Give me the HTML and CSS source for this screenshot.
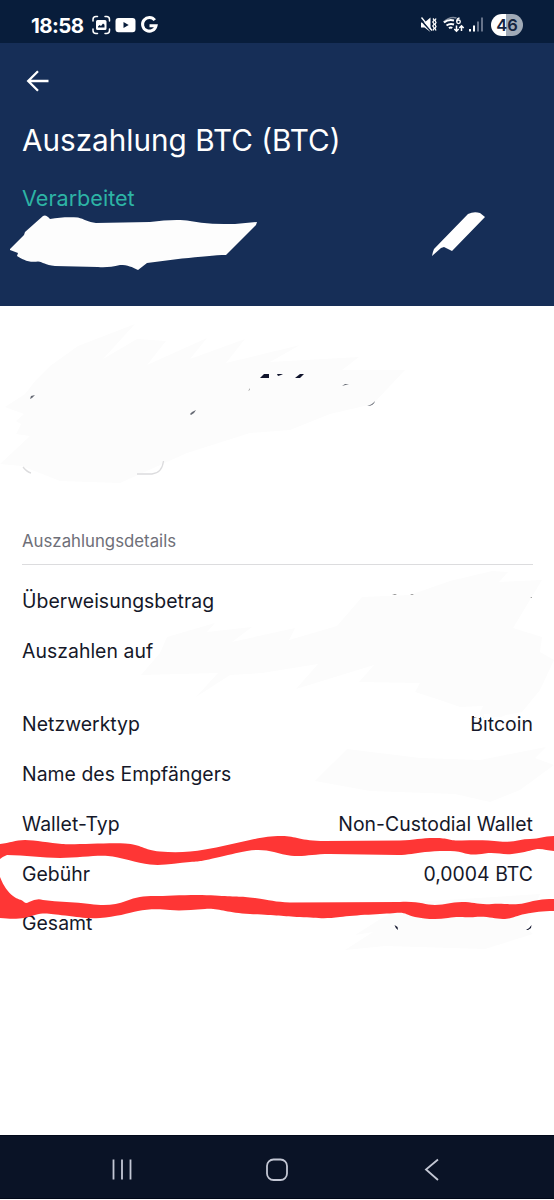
FILE: index.html
```html
<!DOCTYPE html>
<html lang="de">
<head>
<meta charset="utf-8">
<title>Auszahlung BTC</title>
<link rel="stylesheet" href="styles.css">
</head>
<body>
<div class="screen">
  <div class="statusbar">
    <span class="clock">18:58</span>
    <svg class="st-left" width="68" height="20" viewBox="0 0 68 20">
      <g fill="none" stroke="#fff" stroke-width="1.5" stroke-linecap="round">
        <path d="M1 6V4.500Q1 1.500 4 1.500H5.500M13 1.500H14.500Q17.500 1.500 17.500 4.500V6M17.500 14V15.500Q17.500 18.500 14.500 18.500H13M5.500 18.500H4Q1 18.500 1 15.500V14"/>
      </g>
      <path fill="#fff" fill-rule="evenodd" d="M5.500 5H13Q14.500 5 14.500 6.500V13.500Q14.500 15 13 15H5.500Q4 15 4 13.500V6.500Q4 5 5.500 5ZM6 12.500H12.500V9.800L11 8.500L9 11L7.500 10L6 11.500Z"/>
      <path fill="#fff" fill-rule="evenodd" d="M26.500 3H40.500Q43.500 3 43.500 6V14.200Q43.500 17.200 40.500 17.200H26.500Q23.500 17.200 23.500 14.200V6Q23.500 3 26.500 3ZM31.500 7V13L36.700 10Z"/>
      <path fill="none" stroke="#fff" stroke-width="3" d="M62.800 5.200A6.800 6.800 0 1 0 64 10.800H57.500"/>
    </svg>
    <svg class="st-right" width="64" height="18" viewBox="0 0 64 18">
      <path fill="#fff" d="M1 6.500H4.500L10.500 1.500V16L4.500 11.500H1Z"/>
      <path d="M0 3L12.500 17" stroke="#081d3b" stroke-width="1.500"/>
      <path d="M1.500 1.500L12 14.500M13 2.500l1.200 1.500-1.400 2 1.400 2-1.400 2 1.400 2-1.200 2.500M16 2.500l-1 2 1 2-1 2 1 2-1 2 1 2" stroke="#fff" stroke-width="1.300" fill="none"/>
      <path d="M23.500 6Q30 0 36.500 2" stroke="#7c8798" stroke-width="1.600" fill="none"/>
      <path d="M24 6.500Q28.500 3 34 4.500M26.500 9.500Q30 7 34 8.500M29 12.200Q30.500 11 32.300 12" stroke="#fff" stroke-width="2" fill="none"/>
      <path d="M39.500 2Q36.800 2.500 36.800 5.500" stroke="#fff" stroke-width="1.300" fill="none"/>
      <circle cx="38.500" cy="5.800" r="1.800" stroke="#fff" stroke-width="1.300" fill="none"/>
      <path d="M36.500 9.500V15M34.300 13l2.200 2.200 2.200-2.200M41.500 15V10M39.300 12l2.200-2.200 2.200 2.200" stroke="#fff" stroke-width="1.500" fill="none"/>
      <path d="M50 13v2.500M54 9.500v6" stroke="#fff" stroke-width="2"/>
      <path d="M58 5.500v10M62 1.500v14" stroke="#66738a" stroke-width="2"/>
    </svg>
    <span class="battery">46</span>
  </div>
  <header class="header">
    <svg class="back" width="24" height="24" viewBox="0 0 24 24"><path d="M22.500 12H2M12 2.300L2.200 12l9.800 9.700" fill="none" stroke="#fff" stroke-width="2.300"/></svg>
    <h1 class="title">Auszahlung BTC (BTC)</h1>
    <div class="status">Verarbeitet</div>
  </header>
  <main class="content">
    <h2 class="section">Auszahlungsdetails</h2>
    <div class="rows">
      <div class="row"><span>Überweisungsbetrag</span></div>
      <div class="row tall"><span>Auszahlen auf</span></div>
      <div class="row"><span>Netzwerktyp</span><span>Bitcoin</span></div>
      <div class="row"><span>Name des Empfängers</span></div>
      <div class="row"><span>Wallet-Typ</span><span>Non-Custodial Wallet</span></div>
      <div class="row"><span>Gebühr</span><span>0,0004 BTC</span></div>
      <div class="row"><span>Gesamt</span></div>
    </div>
  </main>
  <nav class="navbar">
    <svg width="22" height="24" viewBox="0 0 22 24"><path d="M2.500 1.500v20M11 1.500v20M19.500 1.500v20" stroke="#c3c7d4" stroke-width="1.800"/></svg>
    <svg width="24" height="24" viewBox="0 0 24 24"><rect x="2" y="1.500" width="20" height="20.500" rx="6.500" fill="none" stroke="#c3c7d4" stroke-width="1.800"/></svg>
    <svg width="22" height="24" viewBox="0 0 22 24"><path d="M17 1.500L5 11.500l12 10.500" fill="none" stroke="#c3c7d4" stroke-width="1.800"/></svg>
  </nav>
  <svg class="ink" width="554" height="1200" viewBox="0 0 554 1200">
    <g fill="#fcfcfc">
      <path d="M0 464L30 436 16 434 21 424 16 421 24 414 5 407 25 394 36 380 50 366 78 346 135 324 103 359 137 339 166 341 147 365 207 338 190 359 245 339 226 363 300 345 270 362 359 357 342 370 405 370 373 404 330 414 290 430 250 433 187 453 120 483 60 481 22 466Z"/>
      <path d="M141 675L160 653 167 637 215 623 207 632 252 627 232 642 295 628 289 640 337 626 362 597 410 595 450 581 492 571 508 572 499 582 542 580 513 628 542 637 540 652 554 660 540 690 522 712 506 715 501 717 478 717 483 706 460 707 440 700 415 692 420 683 359 682 374 665 296 689 318 664 262 673 230 675 196 697 218 673Z"/>
      <path d="M315 781L347 749 420 758 480 760 546 747 535 758 554 765 520 790 490 802 455 794 370 791Z"/>
      <path d="M345 950L373 932 355 935 382 918 414 902 540 894 526 927 533 934 485 949 385 946Z"/>
    </g>
    <path fill="#fff" d="M474 714h6v4h-3l-3-1ZM484 714h6v5h-6Z"/>
    <path fill="#fdfdfd" d="M10 249L24 235 25 232 43 216Q46 214 50 219C60 217 70 217 78 217.500C84 219 88 222 96 223L150 222C165 220 180 219 190 221C205 224 220 224 235 224L257 222 256 225 226 255C215 255 200 257 182 258.500L147 263 138 270C132 267 128 265 120 265C112 267 105 267.500 98 267L55 266C45 265 43 262 38 261.500C28 263 22 259 17 256L18 253 10 250Z"/>
    <path fill="#fff" d="M432 256Q433 251 434 249L468 214Q474 211 480 213L485 217 452 251 444 247 441 248Z"/>
    <g fill="#10142c">
      <path d="M260 378L264 374H269V378Z"/><path d="M277 374h6l-2 1-3 1Z"/><path d="M295 378L300 374h4l-4 4Z"/>
      <path d="M30 399l1-3 4-1-3 3ZM190 414l2-2 4-2-2 3-3 2ZM342 386l3-2h4ZM367 406q5-1 8-5-1 5-8 5Z" fill="#666a74"/>
      <path d="M248 391l2-3v2Z" fill="#aaa"/>
      <path d="M394.500 925q1 3.500 3.500 5l-.5-3ZM526 930q4-2 5.500-5l-.5 3-3 2Z"/>
      <path d="M392 594h5l-2 1ZM410 594h4l-2 1ZM530 597h2v1Z" fill="#888"/>
    </g>
    <path d="M23 467Q27 472 31 473M137 474H152Q162 473 163.500 461" fill="none" stroke="#dcdcde" stroke-width="1.300"/>
    <g fill="#fe3635">
      <path d="M0 844C10 843 15 840 25 840S50 843 62 844 108 842.500 125 843.500 143 850 160 851.500 190 852 205 849.500 235 843 250 840 268 836 282 836 300 841 325 841L400 840.500C415 840 420 838 435 838S448 841 462 840.500 488 840 500 841.500 520 839 530 839 543 836 554 836V851C547 851 542 848 535 849.500S522 853 512 854 496 852 485 853.500 470 855 462 852.500 435 851 425 852 408 855 398 855L330 854C315 854 308 856 298 856S282 854 274 852 258 849 247 851 228 855 215 858 203 861 190 862 163 866 150 864.500 120 857 108 856 78 858 60 858 25 855 7 855Q2 857 0 859Z"/>
      <path d="M0 877C4 887 8 892 13 896S21 899 24 902Q26 904 29 902 37 898 43 900C58 902 75 902 90 904S116 905 126 901 143 896 155 896 195 894 215 895.500 240 896 255 898 275 902 290 902.500L400 902C420 901 424 905 435 905S450 902 462 902 478 905 492 904 512 906 525 903 540 899 554 899V911C542 911 535 912 525 914S512 919 503 919 488 916 475 917 460 916 448 918 425 919 415 917 407 912 395 913 355 915 340 917 318 918 300 917 275 915 250 914 220 908 205 909 180 911 170 910 147 909 138 911 115 917 100 918 80 917 65 915.500 45 912 35 915 18 920 0 918Z"/>
    </g>
  </svg>
</div>
</body>
</html>
```
FILE: styles.css
```css
* { box-sizing: border-box; }
body { margin: 0; background: #fff; font-family: Inter, "Liberation Sans", sans-serif; }
svg { display: block; flex: none; }
.screen { position: relative; width: 554px; height: 1200px; display: flex; flex-direction: column; overflow: hidden; }
.statusbar { height: 43px; flex: none; background: #081d3b; display: flex; align-items: center; padding: 7px 31px 0 31px; color: #fff; }
.clock { font-size: 20.500px; font-weight: 650; letter-spacing: -0.600px; width: 60.500px; white-space: nowrap; }
.st-right { margin-left: auto; }
.battery { margin-left: 7px; width: 32px; height: 22px; border-radius: 11px; background: linear-gradient(90deg, #fff 46%, #a0aab7 46%); color: #14243f; font-size: 16.500px; font-weight: 600; line-height: 22px; text-align: center; }
.header { height: 263px; flex: none; background: #162e57; padding: 26px 22px 0; }
.back { margin-left: 4px; }
.title { margin: 29px 0 0; font-size: 29.700px; line-height: 36px; font-weight: 380; color: #fff; white-space: nowrap; }
.status { margin-top: 27px; font-size: 21.600px; line-height: 26px; font-weight: 380; color: #2db4a5; }
.content { flex: 1; padding: 225px 21px 0 22px; }
.section { margin: 0; height: 34px; border-bottom: 1.500px solid #dcdcde; font-size: 16.800px; line-height: 20px; font-weight: 400; color: #6e6f78; }
.rows { margin-top: 24px; display: flex; flex-direction: column; gap: 25.800px; }
.row { height: 24px; display: flex; justify-content: space-between; font-size: 19.400px; line-height: 24px; letter-spacing: 0.040px; font-weight: 390; color: #151829; white-space: nowrap; }
.row.tall { height: 47.600px; }
.navbar { height: 64px; margin-bottom: 1px; flex: none; background: #0a1326; border-top: 1px solid #02091a; border-bottom: 1px solid #02091a; display: flex; justify-content: space-between; align-items: center; padding: 5px 111px 0; }
.ink { position: absolute; left: 0; top: 0; pointer-events: none; }
```
